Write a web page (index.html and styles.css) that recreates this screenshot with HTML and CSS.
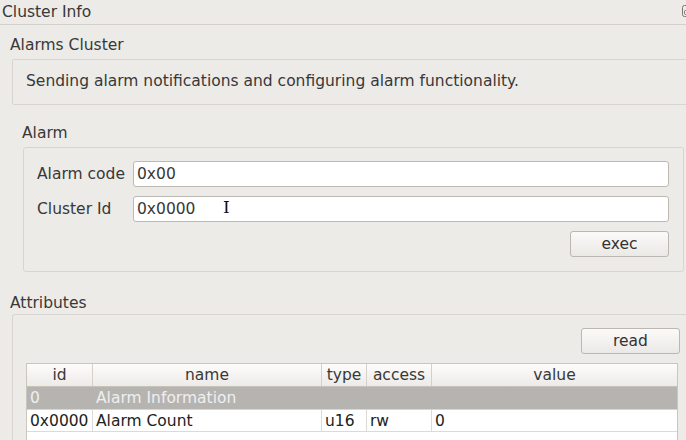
FILE: index.html
```html
<!DOCTYPE html>
<html>
<head>
<meta charset="utf-8">
<link rel="stylesheet" href="styles.css">
</head>
<body>
<div class="page">
  <div class="titlebar">
    <span class="title">Cluster Info</span>
    <svg class="float-icon" width="12" height="12" viewBox="0 0 12 12">
      <rect x="0.5" y="0.5" width="11" height="11" rx="2" fill="none" stroke="#7a7773"/>
      <rect x="4.5" y="2.5" width="5" height="4" rx="1" fill="none" stroke="#7a7773"/>
      <rect x="2.5" y="5.5" width="5" height="4" rx="1" fill="#edebe8" stroke="#7a7773"/>
    </svg>
  </div>

  <div class="section-title">Alarms Cluster</div>
  <div class="desc">Sending alarm notifications and configuring alarm functionality.</div>

  <div class="group-label alarm-label">Alarm</div>
  <div class="group alarm-group">
    <div class="form-row">
      <span class="form-label">Alarm code</span>
      <div class="input">0x00</div>
    </div>
    <div class="form-row">
      <span class="form-label">Cluster Id</span>
      <div class="input">0x0000<span class="cursor">I</span></div>
    </div>
    <div class="btn-row">
      <div class="btn">exec</div>
    </div>
  </div>

  <div class="group-label attr-label">Attributes</div>
  <div class="group attr-group">
    <div class="btn-row read-row">
      <div class="btn">read</div>
    </div>
    <div class="table">
      <div class="trow head">
        <div class="c c-id">id</div>
        <div class="c c-name">name</div>
        <div class="c c-type">type</div>
        <div class="c c-acc">access</div>
        <div class="c c-val">value</div>
      </div>
      <div class="trow grp">
        <div class="c c-id">0</div>
        <div class="c c-name">Alarm Information</div>
        <div class="c c-type"></div>
        <div class="c c-acc"></div>
        <div class="c c-val"></div>
      </div>
      <div class="trow data">
        <div class="c c-id">0x0000</div>
        <div class="c c-name">Alarm Count</div>
        <div class="c c-type">u16</div>
        <div class="c c-acc">rw</div>
        <div class="c c-val">0</div>
      </div>
      <div class="tfill"></div>
    </div>
  </div>
</div>
</body>
</html>
```

FILE: styles.css
```css
html, body {
  margin: 0;
  padding: 0;
  background: #edebe8;
  overflow: hidden;
  width: 686px;
  height: 440px;
}
body {
  font-family: "DejaVu Sans", "Liberation Sans", sans-serif;
  font-size: 15.5px;
  color: #383838;
}
.page {
  display: flex;
  flex-direction: column;
  width: 686px;
  height: 440px;
}
.titlebar {
  height: 24px;
  flex: none;
  border-bottom: 1px solid #d3cfca;
  display: flex;
  align-items: center;
  justify-content: space-between;
  padding-left: 2px;
}
.title {
  line-height: 18px;
  margin-top: -1px;
}
.float-icon {
  margin-right: -8px;
  margin-top: -2px;
}
.section-title {
  margin: 11px 0 5px 10px;
  line-height: 18px;
}
.desc {
  flex: none;
  margin-left: 12px;
  margin-right: -6px;
  border: 1px solid #d8d4cf;
  border-radius: 2px;
  display: flex;
  align-items: center;
  padding-left: 13px;
  padding-bottom: 2px;
  box-sizing: border-box;
  height: 46px;
}
.group-label {
  line-height: 18px;
}
.alarm-label {
  margin: 19px 0 5px 22px;
}
.group {
  border: 1px solid #d8d4cf;
  border-radius: 3px;
  display: flex;
  flex-direction: column;
}
.alarm-group {
  flex: none;
  margin-left: 23px;
  width: 661px;
  box-sizing: border-box;
  padding: 13px 14px 14px 13px;
  gap: 9px;
}
.form-row {
  display: flex;
  align-items: center;
  height: 26px;
}
.form-label {
  width: 96px;
  padding-left: 0;
}
.input {
  flex: 1;
  height: 26px;
  box-sizing: border-box;
  background: #ffffff;
  border: 1px solid #bdb9b3;
  border-radius: 3px;
  padding-left: 3px;
  display: flex;
  align-items: center;
  position: relative;
}
.cursor {
  position: absolute;
  left: 89px;
  top: 2px;
  font-family: "DejaVu Serif", serif;
  font-size: 17px;
  line-height: 17px;
  color: #111;
}
.btn-row {
  display: flex;
  justify-content: flex-end;
}
.btn {
  width: 99px;
  height: 26px;
  box-sizing: border-box;
  border: 1px solid #bbb7b1;
  border-radius: 3px;
  background: linear-gradient(#fbfaf9, #ebe9e6);
  display: flex;
  align-items: center;
  justify-content: center;
  color: #333;
}
.attr-label {
  margin: 22px 0 2px 10px;
}
.attr-group {
  flex: 1;
  margin-left: 12px;
  margin-right: -6px;
  border-bottom: none;
  border-bottom-left-radius: 0;
  border-bottom-right-radius: 0;
  padding: 13px 11px 0 13px;
  min-height: 0;
}
.read-row {
  margin-bottom: 9px;
}
.table {
  margin-right: 2px;
  border: 1px solid #c9c5bf;
  border-bottom: none;
  background: #ffffff;
  display: flex;
  flex-direction: column;
  flex: 1;
}
.trow {
  display: flex;
  flex: none;
}
.c {
  box-sizing: border-box;
  display: flex;
  align-items: center;
  padding-left: 3px;
  white-space: nowrap;
}
.c-id { width: 66px; }
.c-name { width: 229px; }
.c-type { width: 45px; }
.c-acc { width: 65px; }
.c-val { flex: 1; }
.head {
  height: 23px;
  background: linear-gradient(#fdfcfb, #ecebe8);
  border-bottom: 1px solid #c6c2bc;
  box-sizing: border-box;
}
.head .c {
  justify-content: center;
  padding-left: 0;
  border-right: 1px solid #d4d0ca;
}
.head .c-val { border-right: none; }
.grp {
  height: 23px;
  background: #b6b4b1;
  color: #efefef;
  border-bottom: 1px solid #d8d6d3;
  box-sizing: border-box;
}
.data {
  height: 22px;
  border-bottom: 1px solid #dcdad6;
  box-sizing: border-box;
  color: #222;
}
.data .c {
  border-right: 1px solid #dcdad6;
}
.data .c-val { border-right: none; }
.tfill {
  flex: 1;
}
```
